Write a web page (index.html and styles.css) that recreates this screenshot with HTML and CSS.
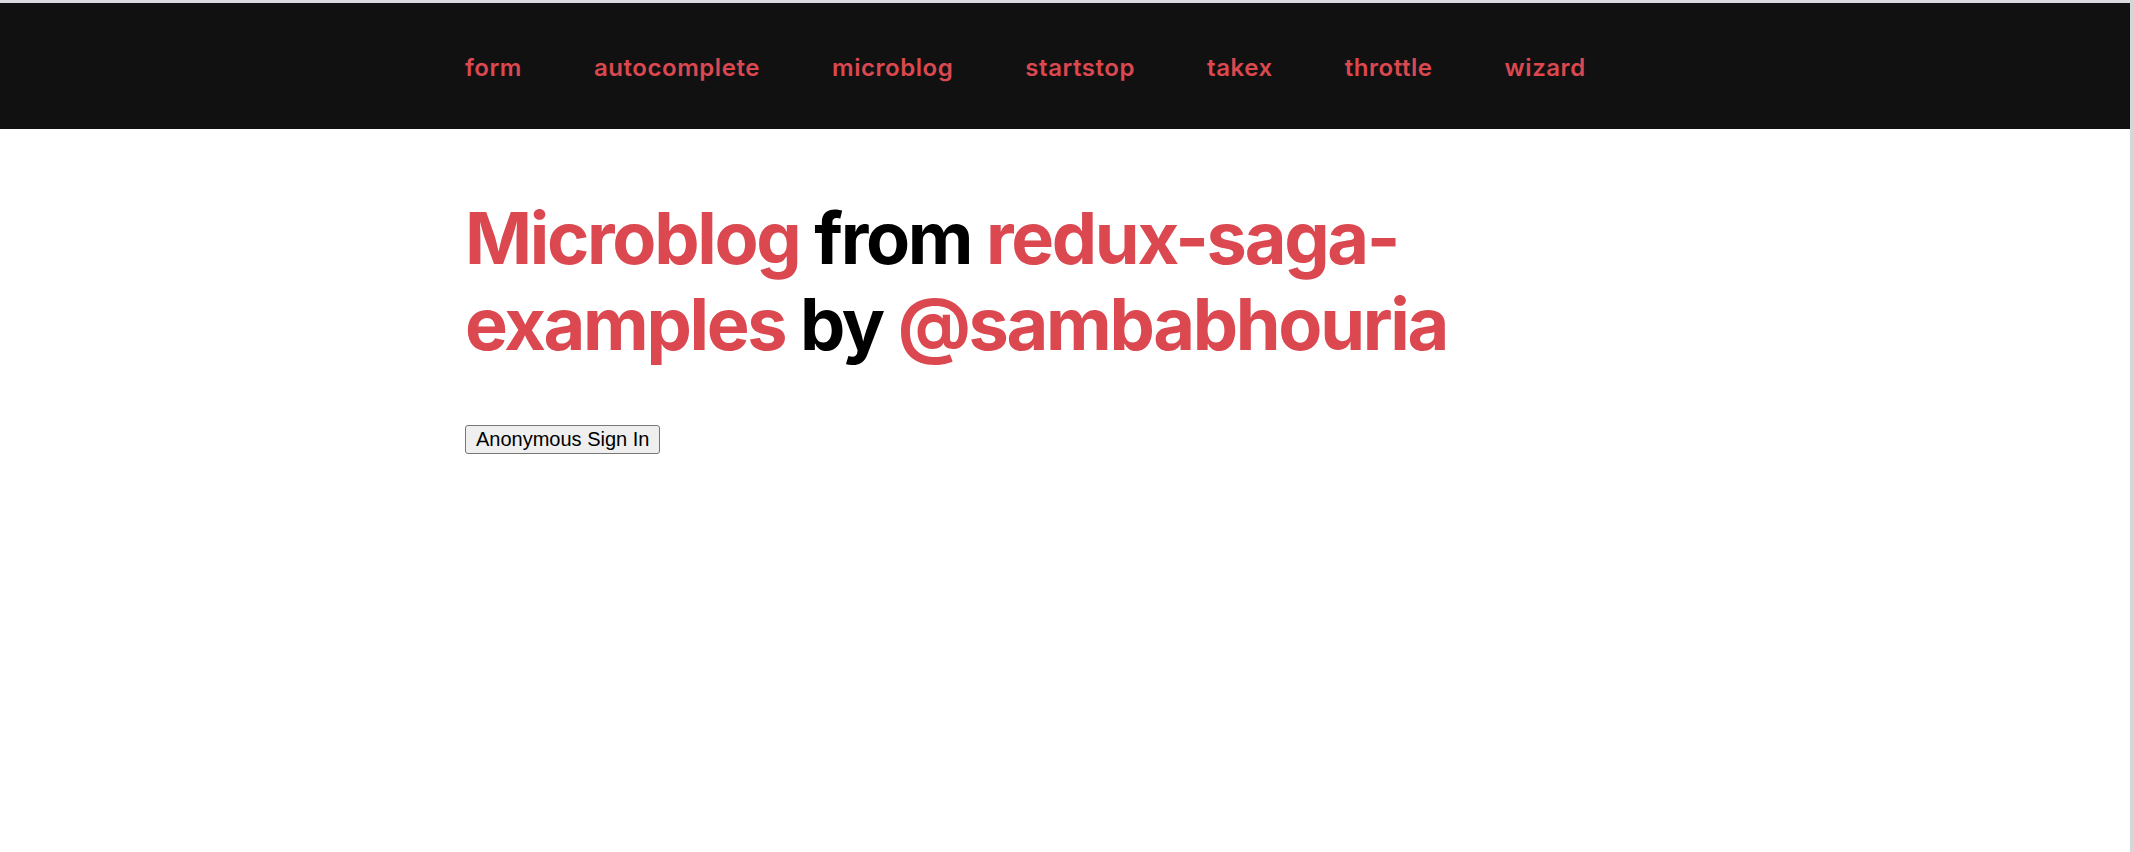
FILE: index.html
```html
<!DOCTYPE html>
<html lang="en">
<head>
<meta charset="utf-8">
<title>Microblog</title>
<link rel="stylesheet" href="styles.css">
</head>
<body>
<div class="page">
  <div class="main">
    <header class="topbar">
      <nav class="nav container">
        <a class="nav-link" href="#">form</a>
        <a class="nav-link" href="#">autocomplete</a>
        <a class="nav-link" href="#">microblog</a>
        <a class="nav-link" href="#">startstop</a>
        <a class="nav-link" href="#">takex</a>
        <a class="nav-link" href="#">throttle</a>
        <a class="nav-link" href="#">wizard</a>
      </nav>
    </header>
    <main class="content container">
      <h1 class="title"><a class="accent" href="#">Microblog</a> from <a class="accent" href="#">redux-saga-examples</a> by <a class="accent" href="#">@sambabhouria</a></h1>
      <button class="signin" type="button">Anonymous Sign In</button>
    </main>
  </div>
  <div class="edge"></div>
</div>
</body>
</html>
```

FILE: styles.css
```css
html, body {
  margin: 0;
  padding: 0;
  background: #ffffff;
}

.page {
  display: flex;
  min-height: 852px;
}

.main {
  flex: 1;
  border-top: 3px solid #dcdce0;
}

.edge {
  width: 4px;
  background: #d6d6d6;
}

.container {
  width: 1200px;
  margin: 0 auto;
}

.topbar {
  background: #111111;
  height: 126px;
  display: flex;
  align-items: center;
}

.nav {
  display: flex;
  gap: 72px;
  padding-top: 2px;
}

.nav-link {
  font-family: "Inter", "Noto Sans", sans-serif;
  font-size: 24px;
  font-weight: 600;
  letter-spacing: 0.55px;
  color: #db4850;
  text-decoration: none;
}

.content {
  padding-top: 66px;
}

.title {
  margin: 0;
  font-family: "Inter", "Noto Sans", sans-serif;
  font-size: 72px;
  font-weight: 700;
  line-height: 1.2;
  color: #000000;
  letter-spacing: -2.3px;
}

.accent {
  color: #db4850;
  text-decoration: none;
}

.signin {
  display: block;
  margin-top: 57px;
  font-family: "Liberation Sans", Arial, sans-serif;
  font-size: 20px;
  line-height: 23px;
  padding: 2px 10px;
  color: #000000;
  background: #efefef;
  border: 1px solid #767676;
  border-radius: 3px;
}
```
